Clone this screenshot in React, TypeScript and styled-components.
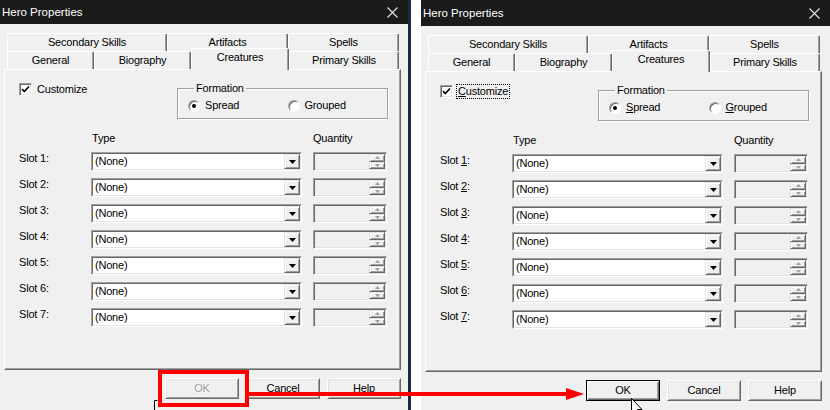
import React from "react";
import styled, { createGlobalStyle } from "styled-components";

const GlobalStyle = createGlobalStyle`
  html, body {
    margin: 0;
    padding: 0;
    background: #fff;
  }
  body {
    font-family: "Liberation Sans", Arial, sans-serif;
  }
`;

const Screen = styled.div`
  position: relative;
  width: 830px;
  height: 410px;
  overflow: hidden;
  display: flex;
  background: #fff;
`;

const Desktop = styled.div`
  flex: none;
  width: 3px;
  background: #1c2a47;
`;

const Spacer = styled.div`
  flex: none;
  width: 10px;
  background: #fff;
`;

const Window = styled.div<{ $width: number }>`
  flex: none;
  width: ${(p) => p.$width}px;
  height: 410px;
  display: flex;
  flex-direction: column;
  background: #f0f0f0;
  color: #000;
  font-size: 11px;
  line-height: 13px;
  letter-spacing: -0.2px;
`;

const TitleBar = styled.div<{ $h: number }>`
  flex: none;
  height: ${(p) => p.$h}px;
  display: flex;
  align-items: center;
  justify-content: space-between;
  padding: 0 10px 0 2px;
  background: #1b1b1b;
  color: #fff;
  font-size: 11.5px;
  letter-spacing: 0;
`;

const Body = styled.div`
  display: flex;
  flex-direction: column;
  width: 397px;
  padding: 9px 0 0 4px;
`;

const TabStrip = styled.div`
  display: flex;
  flex-direction: column;
  margin-left: 3px;
  width: 392px;
`;

const TabRow = styled.div`
  display: flex;
  align-items: flex-end;
  height: 18px;
`;

const Tab = styled.div<{ $w: number; $active?: boolean }>`
  flex: none;
  box-sizing: border-box;
  width: ${(p) => p.$w}px;
  height: ${(p) => (p.$active ? 22 : 18)}px;
  margin-bottom: ${(p) => (p.$active ? -1 : 0)}px;
  position: ${(p) => (p.$active ? "relative" : "static")};
  z-index: ${(p) => (p.$active ? 2 : "auto")};
  display: flex;
  justify-content: center;
  align-items: flex-start;
  padding-top: 2px;
  background: #f0f0f0;
  border-top: 1px solid #fff;
  border-left: 1px solid #fff;
  border-right: 1px solid #696969;
  border-radius: 2px 2px 0 0;
  box-shadow: inset -1px 0 #a0a0a0;
`;

const Panel = styled.div`
  box-sizing: border-box;
  width: 397px;
  height: 301px;
  padding: 12px 0 0 14px;
  border: 1px solid;
  border-color: #fff #696969 #696969 #fff;
  box-shadow: inset -1px -1px #a0a0a0;
  display: flex;
  flex-direction: column;
`;

const TopRow = styled.div`
  display: grid;
  grid-template-columns: 158px 211px;
  align-items: start;
`;

const CheckLine = styled.div`
  display: flex;
  align-items: center;
  gap: 4px;
  margin-top: 1px;
`;

const CheckBox = styled.span`
  box-sizing: border-box;
  width: 13px;
  height: 13px;
  display: flex;
  align-items: center;
  justify-content: center;
  background: #fff;
  border: 1px solid;
  border-color: #a0a0a0 #fff #fff #a0a0a0;
  box-shadow: inset 1px 1px #696969, inset -1px -1px #e3e3e3;
`;

const Focusable = styled.span<{ $focus?: boolean }>`
  padding: 0 1px;
  outline: ${(p) => (p.$focus ? "1px dotted #000" : "none")};
  outline-offset: 0;
`;

const Key = styled.span<{ $on?: boolean }>`
  text-decoration: ${(p) => (p.$on ? "underline" : "none")};
  text-underline-offset: 1px;
`;

const Group = styled.fieldset`
  box-sizing: border-box;
  margin: 0;
  padding: 4px 0 6px 10px;
  min-width: 0;
  width: 211px;
  border: 1px solid #a0a0a0;
  box-shadow: inset 1px 1px #fff, 1px 1px #fff;
  display: flex;
`;

const Legend = styled.legend`
  margin-left: 6px;
  padding: 0 2px;
  line-height: 13px;
`;

const RadioItem = styled.label`
  width: 100px;
  display: flex;
  align-items: center;
  gap: 5px;
`;

const RadioDot = styled.span<{ $on?: boolean }>`
  box-sizing: border-box;
  width: 12px;
  height: 12px;
  border-radius: 50%;
  display: flex;
  align-items: center;
  justify-content: center;
  background: #fff;
  border: 1px solid;
  border-color: #a0a0a0 #fff #fff #a0a0a0;
  box-shadow: inset 1px 1px #696969;
  &::after {
    content: "";
    width: 4px;
    height: 4px;
    border-radius: 50%;
    background: ${(p) => (p.$on ? "#000" : "transparent")};
  }
`;

const SlotGrid = styled.div`
  display: grid;
  grid-template-columns: 61px 211px 74px;
  grid-auto-rows: 19px;
  grid-template-rows: 13px;
  column-gap: 11px;
  row-gap: 7px;
  margin-top: 13px;
`;

const Header = styled.span<{ $indent?: number }>`
  padding-left: ${(p) => p.$indent ?? 0}px;
`;

const SlotLabel = styled.span`
  margin-top: 0;
`;

const Combo = styled.div`
  box-sizing: border-box;
  height: 19px;
  display: flex;
  align-items: center;
  justify-content: space-between;
  padding: 0 0 0 1px;
  background: #fff;
  border: 2px solid;
  border-color: #a0a0a0 #fff #fff #a0a0a0;
  position: relative;
  &::before {
    content: "";
    position: absolute;
    inset: -2px;
    border: 1px solid;
    border-color: #a0a0a0 #fff #fff #a0a0a0;
    pointer-events: none;
  }
  &::after {
    content: "";
    position: absolute;
    inset: -1px;
    border: 1px solid;
    border-color: #696969 #e3e3e3 #e3e3e3 #696969;
    pointer-events: none;
  }
`;

const ComboText = styled.span`
  padding-left: 1px;
`;

const RaisedButton = styled.span<{ $w: number }>`
  box-sizing: border-box;
  flex: none;
  width: ${(p) => p.$w}px;
  height: 100%;
  display: flex;
  align-items: center;
  justify-content: center;
  background: #f0f0f0;
  border: 1px solid;
  border-color: #e3e3e3 #696969 #696969 #e3e3e3;
  box-shadow: inset 1px 1px #fff, inset -1px -1px #a0a0a0;
`;

const Spinner = styled.div`
  box-sizing: border-box;
  height: 19px;
  display: flex;
  justify-content: flex-end;
  background: #f0f0f0;
  border: 1px solid;
  border-color: #a0a0a0 #fff #fff #a0a0a0;
  box-shadow: inset 1px 1px #696969, inset -1px -1px #e3e3e3;
  padding: 1px;
`;

const SpinStack = styled.div`
  width: 16px;
  display: flex;
  flex-direction: column;
`;

const SpinHalf = styled.span`
  box-sizing: border-box;
  flex: 1;
  display: flex;
  align-items: center;
  justify-content: center;
  background: #f0f0f0;
  border: 1px solid;
  border-color: #e3e3e3 #696969 #696969 #e3e3e3;
  box-shadow: inset 1px 1px #fff, inset -1px -1px #a0a0a0;
`;

const Footer = styled.div`
  display: flex;
  justify-content: flex-end;
  gap: 7px;
  margin-top: 8px;
`;

const PushButton = styled.div<{ $disabled?: boolean; $default?: boolean }>`
  box-sizing: border-box;
  width: 74px;
  height: 21px;
  display: flex;
  align-items: center;
  justify-content: center;
  background: #f0f0f0;
  color: ${(p) => (p.$disabled ? "#a0a0a0" : "#000")};
  text-shadow: ${(p) => (p.$disabled ? "1px 1px #fff" : "none")};
  border: 1px solid;
  border-color: ${(p) =>
    p.$default ? "#000" : "#fff #696969 #696969 #fff"};
  box-shadow: ${(p) =>
    p.$default
      ? "inset 1px 1px #fff, inset -1px -1px #696969, inset -2px -2px #a0a0a0"
      : "inset 1px 1px #e3e3e3, inset -1px -1px #a0a0a0"};
`;

const Highlight = styled.div`
  position: absolute;
  left: 158px;
  top: 370px;
  width: 91px;
  height: 37px;
  box-sizing: border-box;
  border: 4px solid #f00;
  pointer-events: none;
`;

const OverlaySvg = styled.svg`
  position: absolute;
  left: 0;
  top: 0;
  pointer-events: none;
`;

const CloseIcon = () => (
  <svg width="11" height="11" viewBox="0 0 11 11">
    <path d="M0.5 0.5 L10.5 10.5 M10.5 0.5 L0.5 10.5" stroke="#e6e6e6" strokeWidth="1.1" />
  </svg>
);

const DownArrow = () => (
  <svg width="7" height="4" viewBox="0 0 7 4">
    <polygon points="0,0 7,0 3.5,4" fill="#000" />
  </svg>
);

const TinyArrow = ({ up }: { up?: boolean }) => (
  <svg width="5" height="3" viewBox="0 0 5 3">
    <polygon points={up ? "0,3 5,3 2.5,0" : "0,0 5,0 2.5,3"} fill="#a0a0a0" />
  </svg>
);

const CheckMark = () => (
  <svg width="9" height="9" viewBox="0 0 9 9">
    <polyline points="1,4 3.3,6.5 8,1.5" fill="none" stroke="#000" strokeWidth="1.7" />
  </svg>
);

const backTabs: [string, number][] = [
  ["Secondary Skills", 160],
  ["Artifacts", 121],
  ["Spells", 111],
];

const frontTabs: [string, number, boolean][] = [
  ["General", 87, false],
  ["Biography", 97, false],
  ["Creatures", 98, true],
  ["Primary Skills", 110, false],
];

const slots = [1, 2, 3, 4, 5, 6, 7];

type DialogProps = {
  width: number;
  titleHeight: number;
  live?: boolean;
};

const HeroDialog: React.FC<DialogProps> = ({ width, titleHeight, live }) => (
  <Window $width={width}>
    <TitleBar $h={titleHeight}>
      <span>Hero Properties</span>
      <CloseIcon />
    </TitleBar>
    <Body>
      <TabStrip>
        <TabRow>
          {backTabs.map(([label, w]) => (
            <Tab key={label} $w={w}>
              {label}
            </Tab>
          ))}
        </TabRow>
        <TabRow>
          {frontTabs.map(([label, w, active]) => (
            <Tab key={label} $w={w} $active={active}>
              {label}
            </Tab>
          ))}
        </TabRow>
      </TabStrip>
      <Panel>
        <TopRow>
          <CheckLine>
            <CheckBox>
              <CheckMark />
            </CheckBox>
            <Focusable $focus={live}>
              <Key $on={live}>C</Key>ustomize
            </Focusable>
          </CheckLine>
          <Group>
            <Legend>Formation</Legend>
            <RadioItem>
              <RadioDot $on />
              <span>
                <Key $on={live}>S</Key>pread
              </span>
            </RadioItem>
            <RadioItem>
              <RadioDot />
              <span>
                <Key $on={live}>G</Key>rouped
              </span>
            </RadioItem>
          </Group>
        </TopRow>
        <SlotGrid>
          <span />
          <Header $indent={1}>Type</Header>
          <Header>Quantity</Header>
          {slots.map((n) => (
            <React.Fragment key={n}>
              <SlotLabel>
                Slot <Key $on={live}>{n}</Key>:
              </SlotLabel>
              <Combo>
                <ComboText>(None)</ComboText>
                <RaisedButton $w={16}>
                  <DownArrow />
                </RaisedButton>
              </Combo>
              <Spinner>
                <SpinStack>
                  <SpinHalf>
                    <TinyArrow up />
                  </SpinHalf>
                  <SpinHalf>
                    <TinyArrow />
                  </SpinHalf>
                </SpinStack>
              </Spinner>
            </React.Fragment>
          ))}
        </SlotGrid>
      </Panel>
      <Footer>
        <PushButton $disabled={!live} $default={live}>
          OK
        </PushButton>
        <PushButton>Cancel</PushButton>
        <PushButton>Help</PushButton>
      </Footer>
    </Body>
  </Window>
);

const App: React.FC = () => (
  <>
    <GlobalStyle />
    <Screen>
      <HeroDialog width={408} titleHeight={24} />
      <Desktop />
      <Spacer />
      <HeroDialog width={409} titleHeight={26} live />
      <Highlight />
      <OverlaySvg width="830" height="410" viewBox="0 0 830 410">
        <line x1="249" y1="394" x2="568" y2="394" stroke="#f00" strokeWidth="4" />
        <polygon points="566,388 584,394 566,400" fill="#f00" />
        <path d="M154.5 410 V400.5 H157.5" fill="none" stroke="#000" strokeWidth="1" />
        <path
          d="M631.5 398.5 V414 L635 410.5 L638 416 L640 415 L637.5 409.5 L642 409.5 Z"
          fill="#fff"
          stroke="#000"
          strokeWidth="1"
        />
      </OverlaySvg>
    </Screen>
  </>
);

export default App;
